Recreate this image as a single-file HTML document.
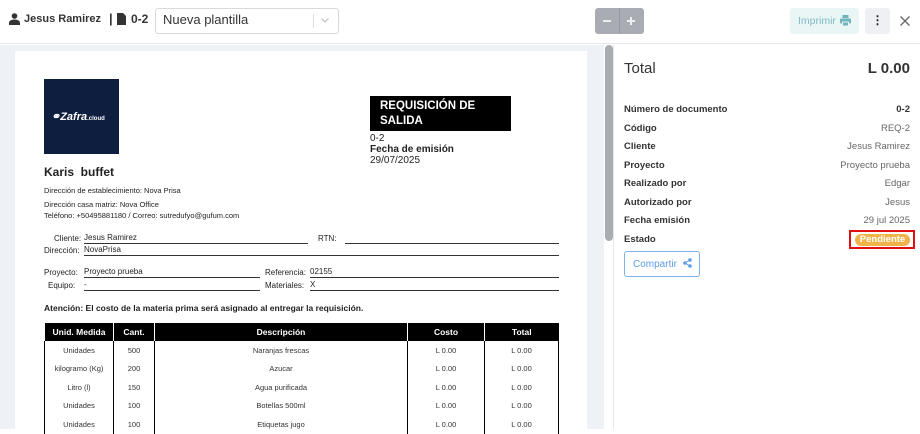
<!DOCTYPE html>
<html><head><meta charset="utf-8"><style>
*{box-sizing:border-box;margin:0;padding:0}
body{width:920px;height:429px;overflow:hidden;font-family:"Liberation Sans",sans-serif;background:#fff;position:relative;color:#222}
.a{position:absolute}
.hdr{left:0;top:0;width:920px;height:44px;border-bottom:1px solid #e5e7eb;background:#fff}
.left{left:0;top:45px;width:604px;height:384px;background:#eef1f5}
.page{left:15px;top:51px;width:572px;height:378px;background:#fff}
.sb{left:605px;top:45px;width:8px;height:196px;background:#a9adb3;border-radius:4px}
.right{left:613px;top:45px;width:307px;height:384px;background:#fff;border-left:1px solid #e5e7eb}
.s{font-size:8px;color:#222}
.ln{border-bottom:1px solid #333}
table{border-collapse:collapse;font-size:7.5px;text-align:center;position:absolute;left:44px;top:323px;width:515px}
th{background:#000;color:#fff;height:18px;font-size:8.5px;border-left:1px solid #fff}
td{height:18.5px;border-left:1px solid #000;border-right:1px solid #000;color:#333}
.row{position:absolute;left:624px;width:286px;font-size:9.5px;display:flex;justify-content:space-between}
.row b{color:#333}.row span{color:#666}
</style></head><body>
<div class="a hdr"></div>
<svg class="a" style="left:9px;top:13px" width="11" height="12" viewBox="0 0 11 12"><circle cx="5.5" cy="3" r="2.8" fill="#333"/><path d="M0 12v-2c0-2 2-3.5 5.5-3.5S11 8 11 10v2z" fill="#333"/></svg>
<div class="a" style="left:24px;top:12px;font-size:11px;font-weight:bold;color:#333;line-height:14px">Jesus Ramirez</div>
<div class="a" style="left:109px;top:11px;font-size:13px;font-weight:bold;color:#333">|</div>
<svg class="a" style="left:117px;top:13px" width="9" height="12" viewBox="0 0 9 12"><path d="M0 0h6l3 3v9H0z" fill="#333"/></svg>
<div class="a" style="left:131px;top:12px;font-size:12px;font-weight:bold;color:#333">0-2</div>
<div class="a" style="left:155px;top:8px;width:184px;height:26px;border:1px solid #d9d9d9;border-radius:3px"></div>
<div class="a" style="left:163px;top:12px;font-size:13px;color:#333">Nueva plantilla</div>
<div class="a" style="left:313px;top:14px;width:1px;height:14px;background:#ddd"></div>
<svg class="a" style="left:321px;top:18px" width="8" height="5" viewBox="0 0 8 5"><path d="M0.5 0.5L4 4l3.5-3.5" stroke="#bbb" fill="none"/></svg>
<div class="a" style="left:595px;top:8px;width:49px;height:26px;background:#a9adb3;border-radius:3px"></div>
<div class="a" style="left:619px;top:8px;width:1px;height:26px;background:#959aa2"></div>
<div class="a" style="left:603px;top:20px;width:8px;height:2px;background:#eee"></div>
<div class="a" style="left:627px;top:20px;width:8px;height:2px;background:#eee"></div>
<div class="a" style="left:630px;top:17px;width:2px;height:8px;background:#eee"></div>
<div class="a" style="left:790px;top:8px;width:69px;height:26px;background:#eaf5f6;border-radius:3px;color:#7fbcc3;font-size:10.5px;padding:7px 0 0 8px">Imprimir</div>
<svg class="a" style="left:840px;top:15px" width="11" height="11" viewBox="0 0 11 11"><rect x="2.5" y="0" width="6" height="3" fill="#6fb3bb"/><rect x="0" y="3.5" width="11" height="5" rx="1" fill="#6fb3bb"/><rect x="2.5" y="7" width="6" height="4" fill="#6fb3bb" stroke="#eaf5f6"/></svg>
<div class="a" style="left:865px;top:8px;width:25px;height:26px;background:#eef0f3;border-radius:3px;text-align:center;font-size:12px;font-weight:bold;line-height:24px">&#8942;</div>
<svg class="a" style="left:900px;top:16px" width="10" height="10" viewBox="0 0 10 10"><path d="M0.5 0.5l9 9M9.5 0.5l-9 9" stroke="#666" stroke-width="1.3"/></svg>

<div class="a left"></div>
<div class="a page"></div>
<div class="a sb"></div>
<div class="a" style="left:44px;top:79px;width:75px;height:75px;background:#0e1e3f;color:#fff;font-size:11px;font-weight:bold;font-style:italic;padding-top:31px;padding-left:7px">&#9901;Zafra<span style="font-size:6px;font-style:normal">.cloud</span></div>
<div class="a" style="left:370px;top:96px;width:141px;height:35px;background:#000;color:#fff;font-size:11.5px;font-weight:bold;padding:3px 0 0 10px;line-height:15px">REQUISICIÓN DE<br>SALIDA</div>
<div class="a" style="left:370px;top:133px;font-size:10px;line-height:11px">0-2<br><b>Fecha de emisión</b><br>29/07/2025</div>
<div class="a" style="left:44px;top:165px;font-size:12px;font-weight:bold">Karis&nbsp; buffet</div>
<div class="a s" style="left:44px;top:184px;line-height:14px;font-size:7.5px">Dirección de establecimiento: Nova Prisa<br>Dirección casa matriz: Nova Office</div>
<div class="a s" style="left:44px;top:211px;font-size:7.5px">Teléfono: +50495881180 / Correo: sutredufyo@gufum.com</div>

<div class="a s" style="left:54px;top:234px">Cliente:</div><div class="a s ln" style="left:84px;top:233px;width:224px;height:11px">Jesus Ramirez</div>
<div class="a s" style="left:318px;top:234px">RTN:</div><div class="a ln" style="left:345px;top:233px;width:214px;height:11px"></div>
<div class="a s" style="left:44px;top:246px">Dirección:</div><div class="a s ln" style="left:84px;top:245px;width:475px;height:11px">NovaPrisa</div>
<div class="a s" style="left:44px;top:268px">Proyecto:</div><div class="a s ln" style="left:84px;top:267px;width:176px;height:11px">Proyecto prueba</div>
<div class="a s" style="left:265px;top:268px">Referencia:</div><div class="a s ln" style="left:310px;top:267px;width:249px;height:11px">02155</div>
<div class="a s" style="left:48px;top:281px">Equipo:</div><div class="a s ln" style="left:84px;top:280px;width:176px;height:11px">-</div>
<div class="a s" style="left:265px;top:281px">Materiales:</div><div class="a s ln" style="left:310px;top:280px;width:249px;height:11px">X</div>
<div class="a" style="left:44px;top:303px;font-size:8.5px;font-weight:bold">Atención: El costo de la materia prima será asignado al entregar la requisición.</div>
<table>
<tr><th style="width:69px">Unid. Medida</th><th style="width:41px">Cant.</th><th style="width:253px">Descripción</th><th style="width:77px">Costo</th><th>Total</th></tr>
<tr><td>Unidades</td><td>500</td><td>Naranjas frescas</td><td>L 0.00</td><td>L 0.00</td></tr>
<tr><td>kilogramo (Kg)</td><td>200</td><td>Azucar</td><td>L 0.00</td><td>L 0.00</td></tr>
<tr><td>Litro (l)</td><td>150</td><td>Agua purificada</td><td>L 0.00</td><td>L 0.00</td></tr>
<tr><td>Unidades</td><td>100</td><td>Botellas 500ml</td><td>L 0.00</td><td>L 0.00</td></tr>
<tr><td>Unidades</td><td>100</td><td>Etiquetas jugo</td><td>L 0.00</td><td>L 0.00</td></tr>
</table>

<div class="a right"></div>
<div class="a" style="left:624px;top:60px;font-size:15px;color:#333">Total</div>
<div class="a" style="left:810px;top:60px;width:100px;text-align:right;font-size:15px;font-weight:bold;color:#333">L 0.00</div>
<div class="row" style="top:104px"><b>Número de documento</b><b>0-2</b></div>
<div class="row" style="top:123px"><b>Código</b><span>REQ-2</span></div>
<div class="row" style="top:141px"><b>Cliente</b><span>Jesus Ramirez</span></div>
<div class="row" style="top:160px"><b>Proyecto</b><span>Proyecto prueba</span></div>
<div class="row" style="top:178px"><b>Realizado por</b><span>Edgar</span></div>
<div class="row" style="top:197px"><b>Autorizado por</b><span>Jesus</span></div>
<div class="row" style="top:215px"><b>Fecha emisión</b><span>29 jul 2025</span></div>
<div class="row" style="top:234px"><b>Estado</b></div>
<div class="a" style="left:849px;top:230px;width:66px;height:19px;border:2px solid #e01010"></div>
<div class="a" style="left:855px;top:234px;width:55px;height:12px;background:#f0b34a;border-radius:6px;color:#fff;font-size:9.5px;font-weight:bold;text-align:center;line-height:12px">Pendiente</div>
<div class="a" style="left:624px;top:251px;width:76px;height:26px;border:1px solid #7fb3f0;border-radius:3px;color:#5c9ee8;font-size:10px;padding:7px 0 0 8px">Compartir</div>
<svg class="a" style="left:683px;top:258px" width="9" height="10" viewBox="0 0 9 10"><circle cx="7" cy="2" r="1.8" fill="#5c9ee8"/><circle cx="2" cy="5" r="1.8" fill="#5c9ee8"/><circle cx="7" cy="8" r="1.8" fill="#5c9ee8"/><path d="M7 2L2 5l5 3" stroke="#5c9ee8" fill="none"/></svg>
</body></html>
